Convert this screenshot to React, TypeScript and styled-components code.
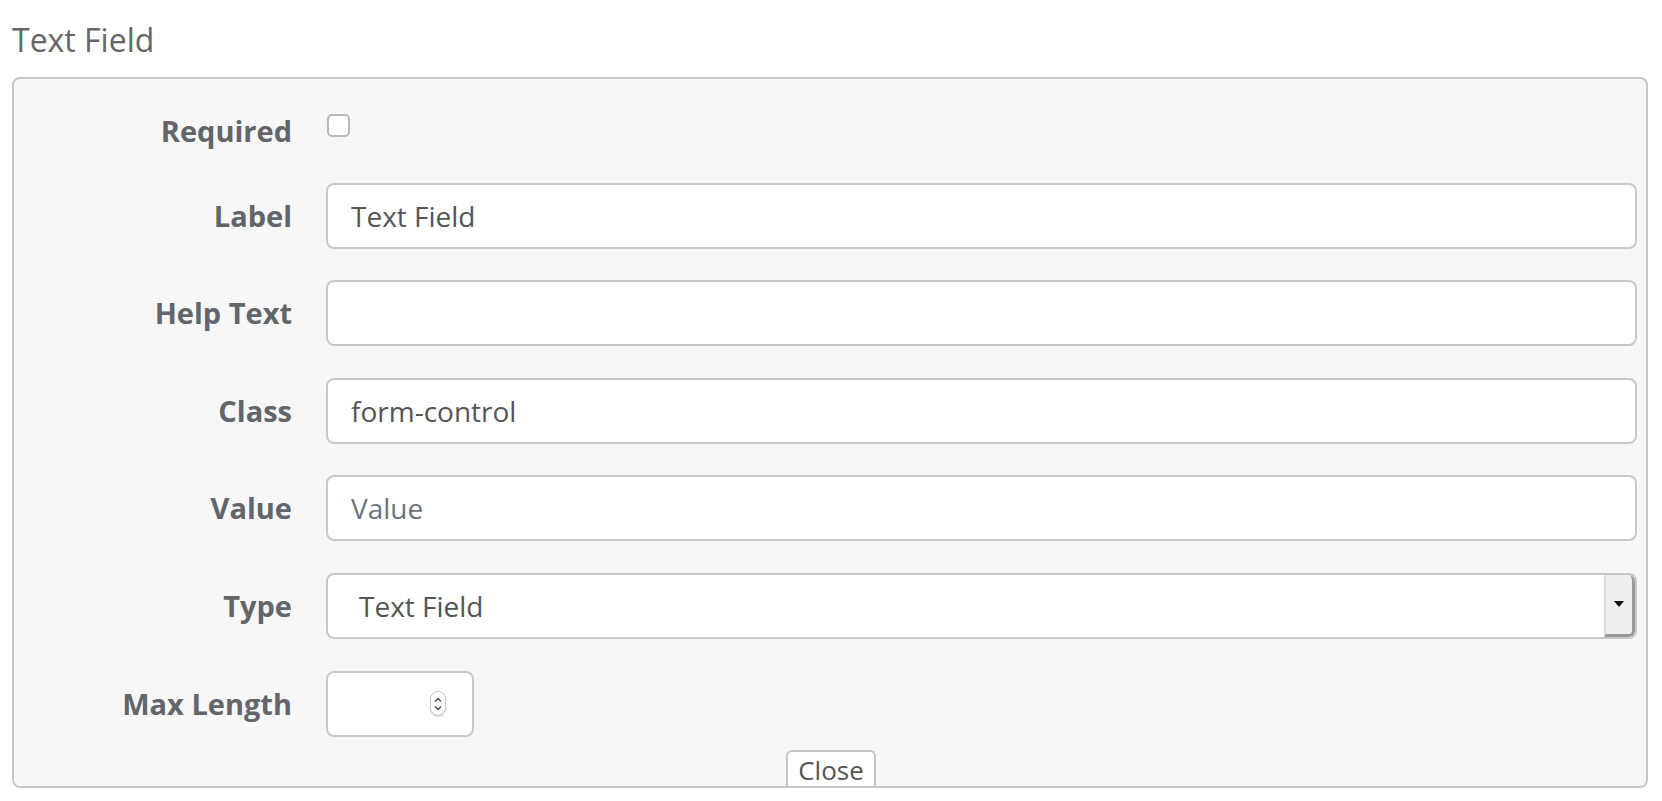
import styled, { createGlobalStyle } from "styled-components"

const GlobalStyle = createGlobalStyle`
  html, body {
    margin: 0;
    padding: 0;
    background: #ffffff;
    font-family: "Open Sans", "Liberation Sans", sans-serif;
  }
`

type Field = {
  label: string
  value?: string
  placeholder?: string
}

const textFields: Field[] = [
  { label: "Label", value: "Text Field" },
  { label: "Help Text", value: "" },
  { label: "Class", value: "form-control" },
  { label: "Value", placeholder: "Value" },
]

function App() {
  return (
    <StPage>
      <GlobalStyle />
      <StTitle>Text Field</StTitle>
      <StFieldset>
        <StRow $compact>
          <StLabel>Required</StLabel>
          <StCheckbox type="checkbox" />
        </StRow>
        {textFields.map((f) => (
          <StRow key={f.label}>
            <StLabel>{f.label}</StLabel>
            <StInput readOnly defaultValue={f.value} placeholder={f.placeholder} />
          </StRow>
        ))}
        <StRow>
          <StLabel>Type</StLabel>
          <StSelect>
            <StSelectText>Text Field</StSelectText>
            <StSelectButton>
              <svg width="10" height="6" viewBox="0 0 10 6">
                <path d="M0 0 L10 0 L5 6 Z" fill="#111" />
              </svg>
            </StSelectButton>
          </StSelect>
        </StRow>
        <StRow>
          <StLabel>Max Length</StLabel>
          <StNumber>
            <StSpinner>
              <svg width="10" height="18" viewBox="0 0 10 18">
                <path d="M2 6.5 L5 3.5 L8 6.5" fill="none" stroke="#444" strokeWidth="1.4" />
                <path d="M2 11.5 L5 14.5 L8 11.5" fill="none" stroke="#444" strokeWidth="1.4" />
              </svg>
            </StSpinner>
          </StNumber>
        </StRow>
        <StCloseTab>Close</StCloseTab>
      </StFieldset>
    </StPage>
  )
}

export default App

const StPage = styled.div`
  padding: 18px 14px 0 12px;
`

const StTitle = styled.div`
  font-size: 32px;
  line-height: 44px;
  color: #666666;
  margin-bottom: 15px;
`

const StFieldset = styled.div`
  display: flex;
  flex-direction: column;
  gap: 31.6px;
  padding: 32px 9px 0 0;
  background: #f7f7f7;
  border: 2px solid #c6c6c6;
  border-radius: 8px;
`

const StRow = styled.div<{ $compact?: boolean }>`
  display: grid;
  grid-template-columns: 278px 1fr;
  column-gap: 34px;
  align-items: ${(p) => (p.$compact ? "start" : "center")};
  height: ${(p) => (p.$compact ? "40px" : "66px")};
`

const StLabel = styled.div`
  text-align: right;
  font-size: 29px;
  line-height: 40px;
  font-weight: 700;
  color: #626569;
`

const StCheckbox = styled.input`
  appearance: none;
  margin: 3px 0 0 1px;
  width: 23px;
  height: 23px;
  background: #ffffff;
  border: 2px solid #b9b9b9;
  border-radius: 5px;
`

const StInput = styled.input`
  box-sizing: border-box;
  width: 100%;
  height: 66px;
  padding: 0 23px;
  background: #ffffff;
  border: 2px solid #c8c8c8;
  border-radius: 8px;
  font-family: "Open Sans", "Liberation Sans", sans-serif;
  font-size: 28px;
  color: #555555;
  outline: none;

  &::placeholder {
    color: #6b747c;
  }
`

const StSelect = styled.div`
  box-sizing: border-box;
  display: flex;
  height: 66px;
  background: #ffffff;
  border: 2px solid #c8c8c8;
  border-radius: 8px;
  overflow: hidden;
`

const StSelectText = styled.div`
  flex: 1;
  padding-left: 31px;
  font-size: 28px;
  line-height: 62px;
  color: #555555;
`

const StSelectButton = styled.div`
  width: 26px;
  display: flex;
  align-items: center;
  justify-content: center;
  background: #efefef;
  border-left: 2px solid #dcdcdc;
  border-right: 3px solid #9a9a9a;
  border-bottom: 3px solid #9a9a9a;
  border-top-right-radius: 6px;
  border-bottom-right-radius: 6px;
`

const StNumber = styled.div`
  box-sizing: border-box;
  width: 148px;
  height: 66px;
  display: flex;
  align-items: center;
  justify-content: flex-end;
  padding-right: 26px;
  background: #ffffff;
  border: 2px solid #c8c8c8;
  border-radius: 8px;
`

const StSpinner = styled.div`
  box-sizing: border-box;
  width: 16px;
  height: 25px;
  display: flex;
  align-items: center;
  justify-content: center;
  background: #ffffff;
  border: 1px solid #c4c4c4;
  border-radius: 8px;
  box-shadow: 0 1px 1px rgba(0, 0, 0, 0.12);
`

const StCloseTab = styled.div`
  align-self: center;
  margin: -18.6px 0 0 11px;
  padding: 2px 10px 0;
  font-size: 26px;
  line-height: 32px;
  color: #555555;
  background: #ffffff;
  border: 2px solid #c6c6c6;
  border-bottom: none;
  border-radius: 6px 6px 0 0;
`
